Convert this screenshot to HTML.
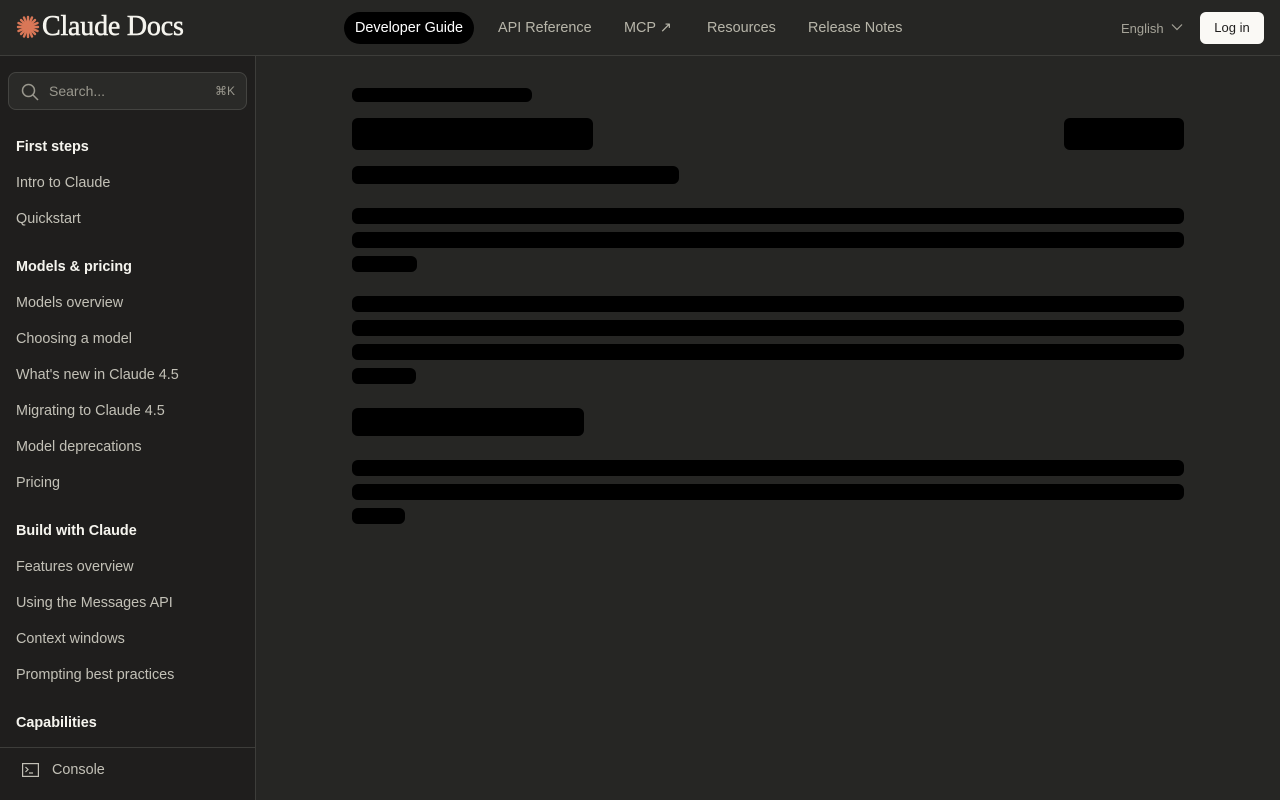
<!DOCTYPE html>
<html><head><meta charset="utf-8"><style>
*{margin:0;padding:0;box-sizing:border-box}
body{width:1280px;height:800px;background:#262624;font-family:"Liberation Sans",sans-serif;position:relative;overflow:hidden;color:#e8e6dc}
.hdr{position:absolute;left:0;top:0;width:1280px;height:56px;background:#262624;border-bottom:1px solid #3d3d3a}
.logo{position:absolute;left:16px;top:11px;font-family:"Liberation Serif",serif;font-size:28px;color:#f5f4ee;display:flex;align-items:center;gap:2px;letter-spacing:-0.2px}
.nav{position:absolute;top:12px;font-size:14.4px;color:#b7b5a9;height:32px;line-height:33px}
.nav.act{background:#000;color:#fff;border-radius:16px;padding:0 11px}
.side{position:absolute;left:0;top:56px;width:256px;height:744px;background:#1f1e1d;border-right:1px solid #3d3d3a}
.search{position:absolute;left:8px;top:16px;width:239px;height:38px;border:1px solid #444441;border-radius:8px;background:#2a2a28}
.s{position:absolute;left:16px;font-size:14.4px;color:#c2c0b6;margin-top:1px}
.h{position:absolute;left:16px;font-size:14.4px;color:#f5f4ee;font-weight:bold;margin-top:1px}
.b{position:absolute;background:#000;border-radius:6px}
</style></head><body>
<div class="hdr">
<div class="logo"><svg width="24" height="24" viewBox="-12 -12 24 24"><g stroke="#d97757" stroke-width="2.4" stroke-linecap="round"><line x1="0" y1="-10" x2="0" y2="10"/><line x1="-10" y1="0" x2="10" y2="0"/><line x1="-7" y1="-7" x2="7" y2="7"/><line x1="-7" y1="7" x2="7" y2="-7"/><line x1="-4" y1="-9.5" x2="4" y2="9.5"/><line x1="-9.5" y1="-4" x2="9.5" y2="4"/><line x1="4" y1="-9.5" x2="-4" y2="9.5"/><line x1="-9.5" y1="4" x2="9.5" y2="-4"/></g></svg><span style="-webkit-text-stroke:0.5px #f5f4ee">Claude Docs</span></div>
<div class="nav act" style="left:344px">Developer Guide</div>
<div class="nav" style="left:498px">API Reference</div>
<div class="nav" style="left:624px">MCP ↗</div>
<div class="nav" style="left:707px">Resources</div>
<div class="nav" style="left:808px">Release Notes</div>
<div class="nav" style="left:1121px;font-size:13px;color:#a5a398">English</div>
<svg style="position:absolute;left:1171px;top:23px" width="12" height="8" viewBox="0 0 12 8" fill="none" stroke="#a5a398" stroke-width="1.2"><path d="M1 1.5l5 5 5-5"/></svg>
<div style="position:absolute;left:1200px;top:12px;width:64px;height:32px;background:#faf9f5;border-radius:6px;color:#1f1e1d;font-size:13px;line-height:32px;text-align:center">Log in</div>
</div>
<div class="side">
<div class="search"><svg style="position:absolute;left:12px;top:10px" width="18" height="18" viewBox="0 0 18 18" fill="none" stroke="#9a988e" stroke-width="1.5"><circle cx="7.5" cy="7.5" r="6"/><line x1="12" y1="12" x2="17" y2="17"/></svg><span style="position:absolute;left:40px;top:10px;font-size:14px;color:#9a988e">Search...</span><span style="position:absolute;right:11px;top:11px;font-size:12px;color:#9a988e">⌘K</span></div>
<div class="h" style="top:82px">First steps</div>
<div class="s" style="top:118px">Intro to Claude</div>
<div class="s" style="top:154px">Quickstart</div>
<div class="h" style="top:202px">Models &amp; pricing</div>
<div class="s" style="top:238px">Models overview</div>
<div class="s" style="top:274px">Choosing a model</div>
<div class="s" style="top:310px">What's new in Claude 4.5</div>
<div class="s" style="top:346px">Migrating to Claude 4.5</div>
<div class="s" style="top:382px">Model deprecations</div>
<div class="s" style="top:418px">Pricing</div>
<div class="h" style="top:466px">Build with Claude</div>
<div class="s" style="top:502px">Features overview</div>
<div class="s" style="top:538px">Using the Messages API</div>
<div class="s" style="top:574px">Context windows</div>
<div class="s" style="top:610px">Prompting best practices</div>
<div class="h" style="top:658px">Capabilities</div>
<div style="position:absolute;left:0;top:691px;width:255px;height:53px;background:#1f1e1d;border-top:1px solid #3d3d3a">
<svg style="position:absolute;left:22px;top:15px" width="17" height="14" viewBox="0 0 17 14" fill="none" stroke="#c2c0b6" stroke-width="1.2"><rect x="0.6" y="0.6" width="15.8" height="12.8"/><path d="M3.5 4l2.5 2.5-2.5 2.5M7 10h4"/></svg>
<span style="position:absolute;left:52px;top:14px;font-size:14.4px;color:#c2c0b6">Console</span></div>
</div>
<div class="b" style="left:352px;top:88px;width:180px;height:14px"></div>
<div class="b" style="left:352px;top:118px;width:241px;height:32px"></div>
<div class="b" style="left:1064px;top:118px;width:120px;height:32px"></div>
<div class="b" style="left:352px;top:166px;width:327px;height:18px"></div>
<div class="b" style="left:352px;top:208px;width:832px;height:16px"></div>
<div class="b" style="left:352px;top:232px;width:832px;height:16px"></div>
<div class="b" style="left:352px;top:256px;width:65px;height:16px"></div>
<div class="b" style="left:352px;top:296px;width:832px;height:16px"></div>
<div class="b" style="left:352px;top:320px;width:832px;height:16px"></div>
<div class="b" style="left:352px;top:344px;width:832px;height:16px"></div>
<div class="b" style="left:352px;top:368px;width:64px;height:16px"></div>
<div class="b" style="left:352px;top:408px;width:232px;height:28px"></div>
<div class="b" style="left:352px;top:460px;width:832px;height:16px"></div>
<div class="b" style="left:352px;top:484px;width:832px;height:16px"></div>
<div class="b" style="left:352px;top:508px;width:53px;height:16px"></div>
</body></html>
